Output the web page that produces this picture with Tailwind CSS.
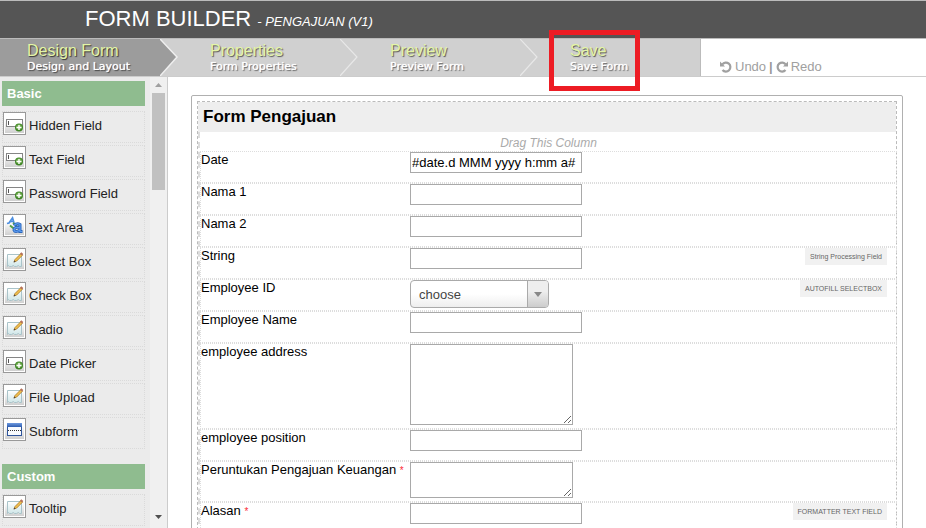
<!DOCTYPE html>
<html lang="en">
<head>
<meta charset="utf-8">
<title>Form Builder</title>
<script src="https://cdn.jsdelivr.net/npm/@tailwindcss/browser@4"></script>
</head>
<body class="flex h-screen flex-col overflow-hidden bg-white font-['Liberation_Sans',Arial,sans-serif] text-[13px] leading-4 text-black">

<svg class="absolute size-0" aria-hidden="true">
  <defs>
    <linearGradient id="tile" x1="0" y1="0" x2="0" y2="1"><stop offset="0.3" stop-color="#fff"/><stop offset="1" stop-color="#d0d0d0"/></linearGradient>
    <linearGradient id="paper" x1="0" y1="0" x2="0" y2="1"><stop offset="0" stop-color="#fff"/><stop offset="1" stop-color="#cfe6e8"/></linearGradient>
    <linearGradient id="bar" x1="0" y1="0" x2="0" y2="1"><stop offset="0" stop-color="#6f9be0"/><stop offset="1" stop-color="#2d5cae"/></linearGradient>
    <symbol id="i-field" viewBox="0 0 19 19">
      <rect width="19" height="19" fill="url(#tile)"/>
      <rect x="1.500" y="5.500" width="16" height="7" fill="#fff" stroke="#858585"/>
      <path d="M3.500 7v4" stroke="#555"/>
      <circle cx="14" cy="13.500" r="4" fill="#3f8526"/>
      <circle cx="14" cy="13" r="2.800" fill="#6fad4c"/>
      <path d="M14 11v5M11.500 13.500h5" stroke="#fff" stroke-width="1.400"/>
    </symbol>
    <symbol id="i-note" viewBox="0 0 19 19">
      <rect width="19" height="19" fill="url(#tile)"/>
      <path d="M2.500 4.500h14v12h-2l-1-1-2 1h-2l-1-1-2 1h-2l-1-1-1 1z" fill="url(#paper)" stroke="#a9c3c9"/>
      <path d="M9 12l1-2.500 6-6 1.600 1.600-6 6z" fill="#f1c04d" stroke="#a87522" stroke-width=".8"/>
      <path d="M15 3.800l1.300-1.600 2 1.900-1.400 1.500z" fill="#b5705c"/>
      <path d="M8.500 12.500l.8-2 1.300 1.200z" fill="#444"/>
    </symbol>
    <symbol id="i-area" viewBox="0 0 19 19">
      <rect width="19" height="19" fill="url(#tile)"/>
      <path d="M2 7.500l2-.5 3.500-5 1.500 5" fill="none" stroke="#4d8fe0" stroke-width="1.800"/>
      <path d="M5 5.500h4" stroke="#4d8fe0" stroke-width="1.500"/>
      <path d="M5 9.500l5 4M8 7l4 3" stroke="#55a043" stroke-width="2"/>
      <path d="M9 9.500q3-3 6-1v7h2.500M15 11.500q-6-1-6 2.500 1 3 6 0" fill="none" stroke="#2a66bd" stroke-width="3"/>
      <path d="M9 9.500q3-3 6-1v7h2M15 11.500q-6-1-6 2.500 1 3 6 0" fill="none" stroke="#5a9aee" stroke-width="1.200"/>
    </symbol>
    <symbol id="i-sub" viewBox="0 0 19 19">
      <rect width="19" height="19" fill="url(#tile)"/>
      <rect x="2.500" y="3.500" width="14" height="12" fill="#f8fbff" stroke="#2f559c"/>
      <rect x="2" y="3" width="15" height="4" fill="url(#bar)"/>
      <path d="M3 10.500h13" stroke="#333" stroke-dasharray="1 1"/>
    </symbol>
  </defs>
</svg>

<header class="flex shrink-0 items-baseline gap-1.5 border-y border-[#bbb] bg-[#555] pt-1 pb-[5px] pl-[85px] text-white">
  <h1 class="text-[22px] leading-7">FORM BUILDER</h1>
  <span class="italic">- PENGAJUAN (V1)</span>
</header>

<nav class="flex h-[38px] shrink-0 border-b border-[#ccc]">
  <ol class="flex bg-[#d0d0d0] text-[#e4f5a6]">
    <li class="flex w-[180px] justify-between">
      <a href="#design" class="grow bg-[#9c9c9c] pt-[3px] pl-[27px] whitespace-nowrap">
        <span class="block text-base leading-[18px] [text-shadow:1px_1px_1px_#333]">Design Form</span>
        <span class="block font-['DejaVu_Sans',Verdana,sans-serif] text-[11px] leading-[14px] text-white [text-shadow:0_0_1px_#fff,1px_1px_1px_#333]">Design and Layout</span>
      </a>
      <svg class="h-[37px] w-5" viewBox="0 0 20 37" aria-hidden="true"><path d="M0 0L17 18L0 37z" fill="#9c9c9c"/><path d="M0 0L17 18L0 37" fill="none" stroke="#efefef" stroke-width="1.500"/></svg>
    </li>
    <li class="flex w-[180px] justify-between">
      <a href="#properties" class="grow pt-[3px] pl-[30px] whitespace-nowrap">
        <span class="block text-base leading-[18px] [text-shadow:1px_1px_1px_#555]">Properties</span>
        <span class="block font-['DejaVu_Sans',Verdana,sans-serif] text-[11px] leading-[14px] text-white [text-shadow:0_0_1px_#fff,1px_1px_1px_#555]">Form Properties</span>
      </a>
      <svg class="h-[37px] w-5" viewBox="0 0 20 37" aria-hidden="true"><path d="M0 0L17 18L0 37" fill="none" stroke="#e8e8e8" stroke-width="1.200"/></svg>
    </li>
    <li class="flex w-[180px] justify-between">
      <a href="#preview" class="grow pt-[3px] pl-[30px] whitespace-nowrap">
        <span class="block text-base leading-[18px] [text-shadow:1px_1px_1px_#555]">Preview</span>
        <span class="block font-['DejaVu_Sans',Verdana,sans-serif] text-[11px] leading-[14px] text-white [text-shadow:0_0_1px_#fff,1px_1px_1px_#555]">Preview Form</span>
      </a>
      <svg class="h-[37px] w-5" viewBox="0 0 20 37" aria-hidden="true"><path d="M0 0L17 18L0 37" fill="none" stroke="#e8e8e8" stroke-width="1.200"/></svg>
    </li>
    <li class="relative w-[161px] border-r border-[#bbb]">
      <a href="#save" class="block pt-[3px] pl-[30px] whitespace-nowrap">
        <span class="block text-base leading-[18px] [text-shadow:1px_1px_1px_#555]">Save</span>
        <span class="block font-['DejaVu_Sans',Verdana,sans-serif] text-[11px] leading-[14px] text-white [text-shadow:0_0_1px_#fff,1px_1px_1px_#555]">Save Form</span>
      </a>
      <div class="pointer-events-none absolute -top-[9px] left-[9px] z-10 h-[61px] w-[91px] border-[5px] border-[#ed1c24]"></div>
    </li>
  </ol>
  <div class="flex items-end gap-[3px] pb-px pl-[19px] text-[#a0a0a0]">
    <button class="flex items-center gap-[3px]">
      <svg class="size-3" viewBox="0 0 12 12" fill="none" stroke="#a0a0a0" stroke-width="2.200" aria-hidden="true"><path d="M2.300 3.300A4.500 4.500 0 1 1 2.500 9"/><path d="M0 .5V5.500H5z" fill="#a0a0a0" stroke="none"/></svg>
      Undo
    </button>
    <span class="font-bold text-[#999]">|</span>
    <button class="flex items-center gap-[3px]">
      <svg class="size-3" viewBox="0 0 12 12" fill="none" stroke="#a0a0a0" stroke-width="2.200" aria-hidden="true"><path d="M9.700 3.300A4.500 4.500 0 1 0 9.500 9"/><path d="M12 .5V5.500H7z" fill="#a0a0a0" stroke="none"/></svg>
      Redo
    </button>
  </div>
</nav>

<div class="flex min-h-0 grow">
  <aside class="flex w-42 shrink-0 border-r border-[#ccc] bg-[#ebebeb]">
    <div class="grow overflow-hidden py-1 pr-[5px] pl-0.5 text-[#222]">
      <h2 class="mb-[5px] bg-[#8fbc8f] px-[5px] py-1 font-bold leading-[17px] text-white">Basic</h2>
      <ul class="mb-[15px] flex flex-col gap-0.5">
        <li><button class="flex h-8 w-full items-start gap-[3px] border border-dotted border-[#dadada] text-left"><svg class="size-[23px] border border-[#999] bg-white p-px"><use href="#i-field"/></svg><span class="pt-1.5">Hidden Field</span></button></li>
        <li><button class="flex h-8 w-full items-start gap-[3px] border border-dotted border-[#dadada] text-left"><svg class="size-[23px] border border-[#999] bg-white p-px"><use href="#i-field"/></svg><span class="pt-1.5">Text Field</span></button></li>
        <li><button class="flex h-8 w-full items-start gap-[3px] border border-dotted border-[#dadada] text-left"><svg class="size-[23px] border border-[#999] bg-white p-px"><use href="#i-field"/></svg><span class="pt-1.5">Password Field</span></button></li>
        <li><button class="flex h-8 w-full items-start gap-[3px] border border-dotted border-[#dadada] text-left"><svg class="size-[23px] border border-[#999] bg-white p-px"><use href="#i-area"/></svg><span class="pt-1.5">Text Area</span></button></li>
        <li><button class="flex h-8 w-full items-start gap-[3px] border border-dotted border-[#dadada] text-left"><svg class="size-[23px] border border-[#999] bg-white p-px"><use href="#i-note"/></svg><span class="pt-1.5">Select Box</span></button></li>
        <li><button class="flex h-8 w-full items-start gap-[3px] border border-dotted border-[#dadada] text-left"><svg class="size-[23px] border border-[#999] bg-white p-px"><use href="#i-note"/></svg><span class="pt-1.5">Check Box</span></button></li>
        <li><button class="flex h-8 w-full items-start gap-[3px] border border-dotted border-[#dadada] text-left"><svg class="size-[23px] border border-[#999] bg-white p-px"><use href="#i-note"/></svg><span class="pt-1.5">Radio</span></button></li>
        <li><button class="flex h-8 w-full items-start gap-[3px] border border-dotted border-[#dadada] text-left"><svg class="size-[23px] border border-[#999] bg-white p-px"><use href="#i-field"/></svg><span class="pt-1.5">Date Picker</span></button></li>
        <li><button class="flex h-8 w-full items-start gap-[3px] border border-dotted border-[#dadada] text-left"><svg class="size-[23px] border border-[#999] bg-white p-px"><use href="#i-note"/></svg><span class="pt-1.5">File Upload</span></button></li>
        <li><button class="flex h-8 w-full items-start gap-[3px] border border-dotted border-[#dadada] text-left"><svg class="size-[23px] border border-[#999] bg-white p-px"><use href="#i-sub"/></svg><span class="pt-1.5">Subform</span></button></li>
      </ul>
      <h2 class="mb-[5px] bg-[#8fbc8f] px-[5px] py-1 font-bold leading-[17px] text-white">Custom</h2>
      <ul class="flex flex-col gap-0.5">
        <li><button class="flex h-8 w-full items-start gap-[3px] border border-dotted border-[#dadada] text-left"><svg class="size-[23px] border border-[#999] bg-white p-px"><use href="#i-note"/></svg><span class="pt-1.5">Tooltip</span></button></li>
      </ul>
    </div>
    <div class="flex w-[17px] shrink-0 flex-col items-center bg-[#f0f0f0]" aria-hidden="true">
      <svg class="h-4 w-[17px]" viewBox="0 0 17 16"><path d="M5 10L8.500 6L12 10z" fill="#a0a0a0"/></svg>
      <div class="h-[97px] w-[13px] bg-[#c1c1c1]"></div>
      <svg class="mt-auto mb-1 h-4 w-[17px]" viewBox="0 0 17 16"><path d="M5 7L8.500 11L12 7z" fill="#505050"/></svg>
    </div>
  </aside>

  <main class="min-w-0 grow overflow-hidden px-[23px] pt-[18px]">
    <form class="rounded-xs border border-[#b0b0b0] p-[5px]">
      <section class="border border-dashed border-[#bbb]">
        <h2 class="bg-[#eee] pt-[5px] pb-[5px] pl-[5px] text-[17px] leading-5 font-bold">Form Pengajuan</h2>
        <div class="-mr-px border-l-2 border-dashed border-[#ddd]">
          <p class="pt-1 text-center text-xs leading-[15px] text-[#aaa] italic">Drag This Column</p>

          <div class="flex min-h-8 items-start border border-dotted border-[#ddd]">
            <label for="date" class="w-[209px] shrink-0">Date</label>
            <input id="date" class="h-[21px] w-[172px] border border-[#a9a9a9] bg-white px-px" value="#date.d MMM yyyy h:mm a#">
          </div>
          <div class="flex min-h-8 items-start border border-dotted border-[#ddd]">
            <label for="nama1" class="w-[209px] shrink-0">Nama 1</label>
            <input id="nama1" class="h-[21px] w-[172px] border border-[#a9a9a9] bg-white px-px">
          </div>
          <div class="flex min-h-8 items-start border border-dotted border-[#ddd]">
            <label for="nama2" class="w-[209px] shrink-0">Nama 2</label>
            <input id="nama2" class="h-[21px] w-[172px] border border-[#a9a9a9] bg-white px-px">
          </div>
          <div class="flex min-h-8 items-start border border-dotted border-[#ddd]">
            <label for="string" class="w-[209px] shrink-0">String</label>
            <input id="string" class="h-[21px] w-[172px] border border-[#a9a9a9] bg-white px-px">
            <span class="mr-[9px] ml-auto bg-[#f1f1f1] p-[5px] text-[7px] leading-[7px] text-[#666]">String Processing Field</span>
          </div>
          <div class="flex min-h-8 items-start border border-dotted border-[#ddd]">
            <label for="empid" class="w-[209px] shrink-0">Employee ID</label>
            <div class="relative flex">
              <select id="empid" class="h-7 w-[139px] appearance-none rounded-[4px] border border-[#aaa] bg-linear-to-t from-[#eee] to-white to-50% pt-px pl-2 text-[#444]"><option>choose</option></select>
              <svg class="pointer-events-none absolute top-px right-px h-[26px] w-[21px] rounded-r-[3px] border-l border-[#aaa] bg-linear-to-t from-[#ccc] to-[#eee] to-60%" viewBox="0 0 20 26" aria-hidden="true"><path d="M6 11h8l-4 5z" fill="#888"/></svg>
            </div>
            <span class="mr-[9px] ml-auto bg-[#f1f1f1] p-[5px] text-[7px] leading-[7px] text-[#666]">AUTOFILL SELECTBOX</span>
          </div>
          <div class="flex min-h-8 items-start border border-dotted border-[#ddd]">
            <label for="empname" class="w-[209px] shrink-0">Employee Name</label>
            <input id="empname" class="h-[21px] w-[172px] border border-[#a9a9a9] bg-white px-px">
          </div>
          <div class="flex min-h-8 items-start border border-dotted border-[#ddd] pb-[3px]">
            <label for="empaddr" class="w-[209px] shrink-0">employee address</label>
            <textarea id="empaddr" class="h-[81px] w-[163px] border border-[#a9a9a9] bg-white p-0.5"></textarea>
          </div>
          <div class="flex min-h-8 items-start border border-dotted border-[#ddd]">
            <label for="emppos" class="w-[209px] shrink-0">employee position</label>
            <input id="emppos" class="h-[21px] w-[172px] border border-[#a9a9a9] bg-white px-px">
          </div>
          <div class="flex min-h-8 items-start border border-dotted border-[#ddd] pb-[3px]">
            <label for="peruntukan" class="w-[209px] shrink-0">Peruntukan Pengajuan Keuangan <span class="text-[10px] text-red-500">*</span></label>
            <textarea id="peruntukan" class="h-9 w-[163px] border border-[#a9a9a9] bg-white p-0.5"></textarea>
          </div>
          <div class="flex min-h-8 items-start border border-dotted border-[#ddd]">
            <label for="alasan" class="w-[209px] shrink-0">Alasan <span class="text-[10px] text-red-500">*</span></label>
            <input id="alasan" class="h-[21px] w-[172px] border border-[#a9a9a9] bg-white px-px">
            <span class="mr-[9px] ml-auto bg-[#f1f1f1] p-[5px] text-[7px] leading-[7px] text-[#666]">FORMATTER TEXT FIELD</span>
          </div>
        </div>
      </section>
    </form>
  </main>
</div>
</body>
</html>
